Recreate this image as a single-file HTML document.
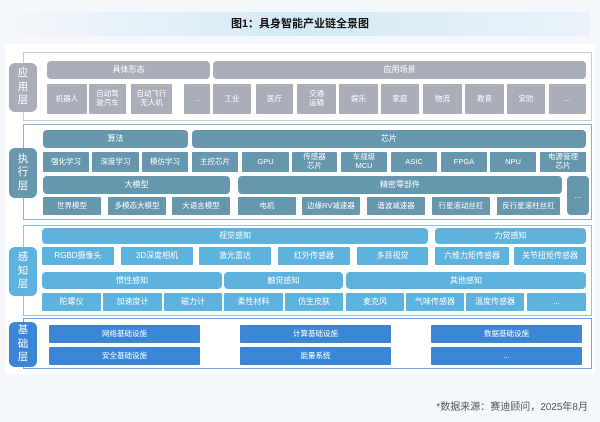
<!DOCTYPE html>
<html><head><meta charset="utf-8"><style>
*{margin:0;padding:0;box-sizing:border-box}
body{width:600px;height:422px;background:#f4f7fb;position:relative;overflow:hidden;font-family:"Liberation Sans","Noto Sans CJK SC",sans-serif}
.a{position:absolute;display:flex;align-items:center;justify-content:center;text-align:center;color:#fff;font-size:7.5px;line-height:1.15}
.g{background:#a9aeb8}.t{background:#6797ac}.s{background:#5db2de}.b{background:#3c86d8}
.h{border-radius:4px;font-size:8px}
.i{border-radius:1px}
.lab{position:absolute;left:9px;width:28px;border-radius:6px;color:#fff;font-size:10.5px;line-height:1.3;display:flex;align-items:center;justify-content:center;text-align:center}
.box{position:absolute;left:23px;width:569px;border:1px solid}
</style></head><body>
<div style="position:absolute;left:5px;top:44px;width:590px;height:330px;background:#fff"></div>
<div style="position:absolute;left:10px;top:12px;width:580px;height:24px;background:linear-gradient(90deg,rgba(212,234,246,0),#d3e9f5 50%,rgba(212,234,246,0.3))"></div>
<div class="a" style="left:0;top:12px;width:600px;height:24px;color:#111;font-size:11px;font-weight:bold">图1：具身智能产业链全景图</div>

<div class="box" style="top:52px;height:69px;border-color:#c8ccd2"></div>
<div class="lab g" style="top:63px;height:49px">应<br>用<br>层</div>
<div class="a g h" style="left:47px;top:61px;width:163px;height:18px">具体形态</div>
<div class="a g h" style="left:213px;top:61px;width:373px;height:18px">应用场景</div>
<div class="a g i" style="left:47px;top:84px;width:40px;height:30px">机器人</div>
<div class="a g i" style="left:89px;top:84px;width:37px;height:30px">自动驾<br>驶汽车</div>
<div class="a g i" style="left:131px;top:84px;width:41px;height:30px">自动飞行<br>无人机</div>
<div class="a g i" style="left:184px;top:84px;width:26px;height:30px">...</div>
<div class="a g i" style="left:213px;top:84px;width:38px;height:30px">工业</div>
<div class="a g i" style="left:256px;top:84px;width:37px;height:30px">医疗</div>
<div class="a g i" style="left:297px;top:84px;width:39px;height:30px">交通<br>运输</div>
<div class="a g i" style="left:339px;top:84px;width:39px;height:30px">娱乐</div>
<div class="a g i" style="left:381px;top:84px;width:38px;height:30px">家庭</div>
<div class="a g i" style="left:423px;top:84px;width:39px;height:30px">物流</div>
<div class="a g i" style="left:465px;top:84px;width:39px;height:30px">教育</div>
<div class="a g i" style="left:507px;top:84px;width:38px;height:30px">安防</div>
<div class="a g i" style="left:549px;top:84px;width:37px;height:30px">...</div>

<div class="box" style="top:124px;height:96px;border-color:#8fb3c4"></div>
<div class="lab t" style="top:148px;height:50px">执<br>行<br>层</div>
<div class="a t h" style="left:43px;top:130px;width:145px;height:18px">算法</div>
<div class="a t h" style="left:192px;top:130px;width:394px;height:18px">芯片</div>
<div class="a t i" style="left:43px;top:152px;width:46px;height:20px">强化学习</div>
<div class="a t i" style="left:92px;top:152px;width:47px;height:20px">深度学习</div>
<div class="a t i" style="left:142px;top:152px;width:46px;height:20px">模仿学习</div>
<div class="a t i" style="left:192px;top:152px;width:46px;height:20px">主控芯片</div>
<div class="a t i" style="left:242px;top:152px;width:47px;height:20px">GPU</div>
<div class="a t i" style="left:292px;top:152px;width:45px;height:20px">传感器<br>芯片</div>
<div class="a t i" style="left:341px;top:152px;width:46px;height:20px">车规级<br>MCU</div>
<div class="a t i" style="left:391px;top:152px;width:46px;height:20px">ASIC</div>
<div class="a t i" style="left:441px;top:152px;width:46px;height:20px">FPGA</div>
<div class="a t i" style="left:490px;top:152px;width:46px;height:20px">NPU</div>
<div class="a t i" style="left:540px;top:152px;width:46px;height:20px">电源管理<br>芯片</div>
<div class="a t h" style="left:43px;top:176px;width:187px;height:18px">大模型</div>
<div class="a t h" style="left:238px;top:176px;width:324px;height:18px">精密零部件</div>
<div class="a t h" style="left:567px;top:176px;width:22px;height:39px">...</div>
<div class="a t i" style="left:43px;top:197px;width:58px;height:18px">世界模型</div>
<div class="a t i" style="left:108px;top:197px;width:58px;height:18px">多模态大模型</div>
<div class="a t i" style="left:172px;top:197px;width:58px;height:18px">大语言模型</div>
<div class="a t i" style="left:238px;top:197px;width:58px;height:18px">电机</div>
<div class="a t i" style="left:302px;top:197px;width:58px;height:18px">边缘RV减速器</div>
<div class="a t i" style="left:367px;top:197px;width:58px;height:18px">谐波减速器</div>
<div class="a t i" style="left:432px;top:197px;width:58px;height:18px">行星滚动丝杠</div>
<div class="a t i" style="left:497px;top:197px;width:63px;height:18px">反行星滚柱丝杠</div>

<div class="box" style="top:225px;height:91px;border-color:#8cc7e6"></div>
<div class="lab s" style="top:247px;height:49px">感<br>知<br>层</div>
<div class="a s h" style="left:42px;top:228px;width:386px;height:16px">视觉感知</div>
<div class="a s h" style="left:435px;top:228px;width:151px;height:16px">力觉感知</div>
<div class="a s i" style="left:42px;top:247px;width:72px;height:18px;font-size:8px">RGBD摄像头</div>
<div class="a s i" style="left:121px;top:247px;width:72px;height:18px;font-size:8px">3D深度相机</div>
<div class="a s i" style="left:199px;top:247px;width:72px;height:18px;font-size:8px">激光雷达</div>
<div class="a s i" style="left:278px;top:247px;width:72px;height:18px;font-size:8px">红外传感器</div>
<div class="a s i" style="left:357px;top:247px;width:71px;height:18px;font-size:8px">多目视觉</div>
<div class="a s i" style="left:435px;top:247px;width:74px;height:18px;font-size:8px">六维力矩传感器</div>
<div class="a s i" style="left:514px;top:247px;width:72px;height:18px;font-size:8px">关节扭矩传感器</div>
<div class="a s h" style="left:42px;top:272px;width:180px;height:17px">惯性感知</div>
<div class="a s h" style="left:224px;top:272px;width:119px;height:17px">触觉感知</div>
<div class="a s h" style="left:346px;top:272px;width:240px;height:17px">其他感知</div>
<div class="a s i" style="left:42px;top:293px;width:59px;height:18px;font-size:8px">陀螺仪</div>
<div class="a s i" style="left:103px;top:293px;width:59px;height:18px;font-size:8px">加速度计</div>
<div class="a s i" style="left:164px;top:293px;width:58px;height:18px;font-size:8px">磁力计</div>
<div class="a s i" style="left:224px;top:293px;width:59px;height:18px;font-size:8px">柔性材料</div>
<div class="a s i" style="left:285px;top:293px;width:58px;height:18px;font-size:8px">仿生皮肤</div>
<div class="a s i" style="left:346px;top:293px;width:58px;height:18px;font-size:8px">麦克风</div>
<div class="a s i" style="left:406px;top:293px;width:58px;height:18px;font-size:8px">气味传感器</div>
<div class="a s i" style="left:466px;top:293px;width:58px;height:18px;font-size:8px">温度传感器</div>
<div class="a s i" style="left:527px;top:293px;width:59px;height:18px;font-size:8px">...</div>

<div class="box" style="top:318px;height:51px;border-color:#7aa6e0"></div>
<div class="lab b" style="top:322px;height:45px">基<br>础<br>层</div>
<div class="a b i" style="left:49px;top:325px;width:151px;height:18px">网络基础设施</div>
<div class="a b i" style="left:240px;top:325px;width:151px;height:18px">计算基础设施</div>
<div class="a b i" style="left:431px;top:325px;width:151px;height:18px">数据基础设施</div>
<div class="a b i" style="left:49px;top:347px;width:151px;height:18px">安全基础设施</div>
<div class="a b i" style="left:240px;top:347px;width:151px;height:18px">能量系统</div>
<div class="a b i" style="left:431px;top:347px;width:151px;height:18px">...</div>

<div style="position:absolute;right:12px;top:398px;font-size:10px;color:#555">*数据来源：赛迪顾问，2025年8月</div>
</body></html>
